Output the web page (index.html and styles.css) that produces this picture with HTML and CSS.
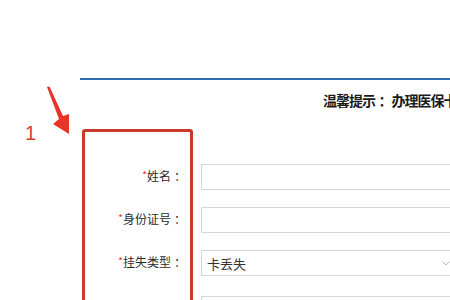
FILE: index.html
```html
<!DOCTYPE html>
<html lang="zh-CN">
<head>
<meta charset="utf-8">
<title>医保卡挂失</title>
<link rel="stylesheet" href="styles.css">
</head>
<body>
<div class="page">
  <div class="panel">
    <div class="hint">温馨提示<span class="colon">：</span>办理医保卡挂失业务请如实填写以下信息</div>
    <form class="form">
      <div class="row">
        <label class="label"><span class="req">*</span>姓名<span class="colon">：</span></label>
        <input class="field" type="text">
      </div>
      <div class="row">
        <label class="label"><span class="req">*</span>身份证号<span class="colon">：</span></label>
        <input class="field" type="text">
      </div>
      <div class="row row-gap">
        <label class="label"><span class="req">*</span>挂失类型<span class="colon">：</span></label>
        <div class="field select">
          <span class="select-text">卡丢失</span>
          <svg class="chevron" width="8" height="5" viewBox="0 0 8 5"><path d="M0.5 0.5 L4 4 L7.5 0.5" fill="none" stroke="#b8b8b8" stroke-width="1"/></svg>
        </div>
      </div>
      <div class="row">
        <label class="label label-faint"><span class="req">*</span>联系电话<span class="colon">：</span></label>
        <input class="field" type="text">
      </div>
    </form>
  </div>
  <div class="mark-num">1</div>
  <svg class="mark-arrow" width="30" height="55" viewBox="0 0 30 55">
    <polygon points="1,1 3.5,0.5 17,30 23,28 23,48 7,38 13,33" fill="#e8322a"/>
  </svg>
  <div class="mark-box"></div>
</div>
</body>
</html>
```

FILE: styles.css
```css
html, body {
  margin: 0;
  padding: 0;
  background: #ffffff;
  overflow: hidden;
}

.page {
  position: relative;
  width: 450px;
  height: 300px;
  overflow: hidden;
  padding-top: 78px;
  box-sizing: border-box;
  font-family: "Noto Sans CJK SC", "Microsoft YaHei", sans-serif;
}

.panel {
  margin-left: 80px;
  width: 700px;
  border-top: 2px solid #2f6cae;
}

.hint {
  padding: 10px 0 0 243px;
  line-height: 20px;
  font-size: 14px;
  letter-spacing: -1px;
  font-weight: 700;
  color: #1a1a1a;
  white-space: nowrap;
}

.colon {
  padding-left: 0.25em;
}

.form {
  margin: 54px 0 0 0;
}

.row {
  display: flex;
  align-items: center;
  height: 26px;
  margin-bottom: 17px;
}

.row-gap {
  margin-bottom: 20px;
}

.label {
  width: 106px;
  text-align: right;
  font-size: 12px;
  line-height: 22px;
  align-self: flex-start;
  color: #2a2a2a;
  white-space: nowrap;
}

.label-faint {
  color: #bbb;
}

.req {
  color: #d9322a;
  font-size: 10px;
  vertical-align: 2px;
}

.field {
  margin-left: 15px;
  width: 262px;
  height: 26px;
  box-sizing: border-box;
  border: 1px solid #d6d6d6;
  background: #fff;
  padding: 0;
  outline: none;
}

.select {
  display: flex;
  align-items: center;
  justify-content: space-between;
  padding: 0 12px 0 5px;
}

.select-text {
  font-size: 13px;
  color: #333;
}

.chevron {
  display: block;
}

.mark-num {
  position: absolute;
  left: 25px;
  top: 120px;
  font-family: "Liberation Sans", Arial, sans-serif;
  font-size: 20px;
  line-height: 26px;
  color: #d8402e;
}

.mark-arrow {
  position: absolute;
  left: 46px;
  top: 86px;
}

.mark-box {
  position: absolute;
  left: 82px;
  top: 129px;
  width: 111px;
  height: 200px;
  box-sizing: border-box;
  border: 3px solid #c93a2c;
  border-radius: 3px;
}
```
